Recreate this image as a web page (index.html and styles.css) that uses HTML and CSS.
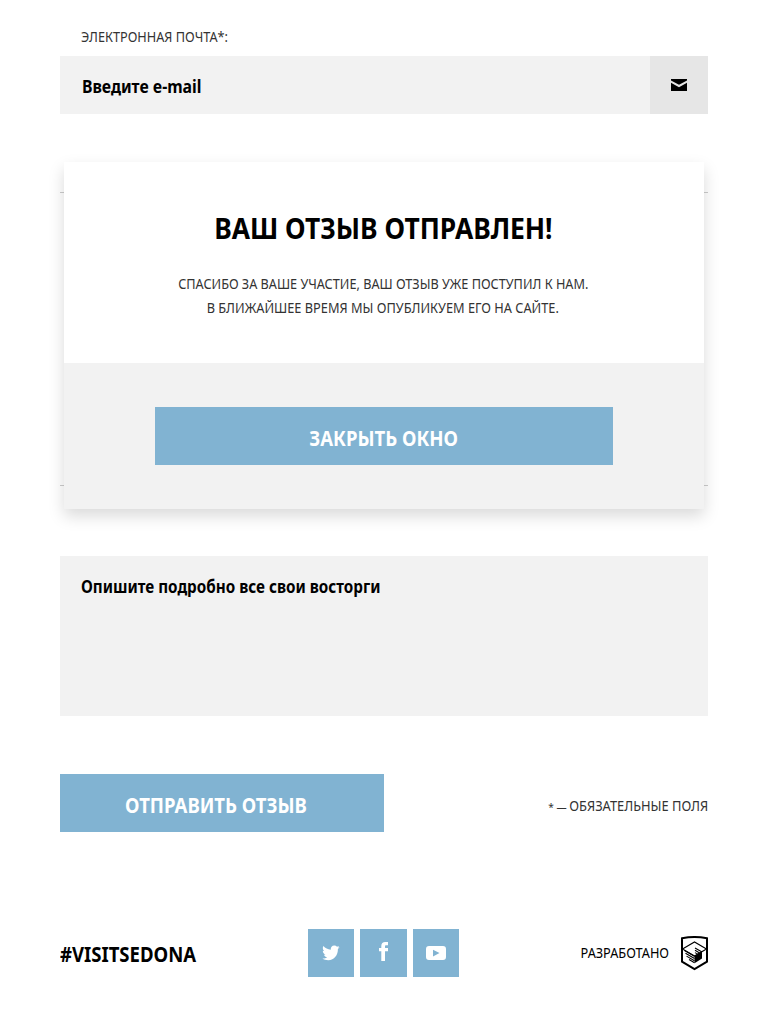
FILE: index.html
```html
<!DOCTYPE html>
<html lang="ru">
<head>
<meta charset="utf-8">
<title>Sedona</title>
<link rel="stylesheet" href="styles.css">
</head>
<body>
<main class="page">
  <form class="form">
    <div class="label"><span class="t t-label">ЭЛЕКТРОННАЯ ПОЧТА*:</span></div>
    <div class="email">
      <div class="email-field"><span class="t t-email">Введите e-mail</span></div>
      <div class="email-icon">
        <svg width="16" height="12" viewBox="0 0 16 12"><path d="M0 0H16V1.4L8 5.7L0 1.4Z"/><path d="M0 3.8L8 8.3L16 3.8V12H0Z"/></svg>
      </div>
    </div>
    <div class="fieldset"></div>
    <div class="textarea"><span class="t t-area">Опишите подробно все свои восторги</span></div>
    <div class="submit-row">
      <div class="button button-submit"><span class="t t-submit">ОТПРАВИТЬ ОТЗЫВ</span></div>
      <div class="note"><span class="t t-note"><span class="note-mark">* — </span>ОБЯЗАТЕЛЬНЫЕ ПОЛЯ</span></div>
    </div>
  </form>
  <footer class="footer">
    <div class="hashtag"><span class="t t-hash">#VISITSEDONA</span></div>
    <div class="social">
      <a class="social-link"><svg width="18" height="16" viewBox="0 0 18 16"><path d="M17.6 2.2L15.9 4C16.1 10 12.2 15.2 6.3 15.2C4 15.2 1.9 14.7.4 13.6C2.3 13.7 4 13.2 5.2 12.2C3.5 12 2.5 11 2 9.7H3.5C1.8 9 .8 7.6.8 5.8L2.3 6.2C.7 4.8.4 2.9 1.4 1.1C3.3 3.3 5.7 4.6 8.8 4.8C8.5 2.4 10 .6 12.3.6C13.4.6 14.3 1 15 1.7L17 .9L16.1 2.6Z"/></svg></a>
      <a class="social-link social-link-wide"><svg width="10" height="19" viewBox="0 0 10 19"><path d="M9 0V3.2H7C6.3 3.2 6 3.6 6 4.3V6H9V9.2H6V19H2.3V9.2H0V6H2.3V4C2.3 1.4 3.8 0 6.2 0Z"/></svg></a>
      <a class="social-link"><svg width="20" height="14" viewBox="0 0 20 14"><path fill-rule="evenodd" d="M3 0H17Q20 0 20 3V11Q20 14 17 14H3Q0 14 0 11V3Q0 0 3 0ZM7 3.8V10.4L13.5 7.1Z"/></svg></a>
    </div>
    <div class="dev">
      <span class="t t-dev">РАЗРАБОТАНО</span>
      <svg class="academy" width="27" height="35" viewBox="0 0 27 35"><path d="M1 2.3Q13.5 -.3 26 2.3V25.6L13.5 33.2L1 25.6Z" fill="none" stroke="#000" stroke-width="2"/><path d="M1.5 13L13.5 6L25.5 13L13.5 20Z" fill="none" stroke="#000" stroke-width="1.1"/><path d="M13.5 20L21 15.6V22.4L13.5 27.2Z"/><path d="M14 12L21 16M14 14.3L19 17.2M14 16.6L17 18.4M3.5 14.5L13.5 20.3M4.5 17.3L13.5 22.5M5.5 20.1L13.5 24.8M8 23.5L13.5 26.8" fill="none" stroke="#000" stroke-width="1.1"/></svg>
    </div>
  </footer>
</main>
<section class="modal">
  <div class="modal-head">
    <h2 class="modal-title"><span class="t t-title">ВАШ ОТЗЫВ ОТПРАВЛЕН!</span></h2>
    <p class="modal-line"><span class="t t-line1">СПАСИБО ЗА ВАШЕ УЧАСТИЕ, ВАШ ОТЗЫВ УЖЕ ПОСТУПИЛ К НАМ.</span></p>
    <p class="modal-line"><span class="t t-line2">В БЛИЖАЙШЕЕ ВРЕМЯ МЫ ОПУБЛИКУЕМ ЕГО НА САЙТЕ.</span></p>
  </div>
  <div class="modal-foot">
    <div class="button button-close"><span class="t t-close">ЗАКРЫТЬ ОКНО</span></div>
  </div>
</section>
</body>
</html>
```
FILE: styles.css
```css
* { box-sizing: border-box; }
body { margin: 0; background: #fff; color: #000; font-family: "Noto Sans", sans-serif; }
.page { width: 768px; height: 1013px; padding: 25px 60px 0; overflow: hidden; }
.t { display: inline-block; white-space: nowrap; transform-origin: 0 50%; }
.t-label { transform: scaleX(0.928); }
.t-email { transform: scaleX(0.897); }
.t-area { transform: scaleX(0.866); }
.t-title { transform: scaleX(0.898); }
.t-line1 { transform: scaleX(0.927); }
.t-line2 { transform: scaleX(0.933); }
.t-close, .t-submit, .t-hash { transform: scaleX(0.9); }
.t-note { transform: scaleX(0.94); }
.t-dev { transform: scaleX(0.931); }
.label { height: 31px; padding-left: 21px; font-size: 13.7px; line-height: 24px; color: #333; }
.email { display: flex; height: 58px; background: #f2f2f2; }
.email-field { flex: 1; padding-left: 22px; font-size: 17.6px; font-weight: 700; line-height: 61px; }
.email-icon { display: flex; width: 58px; align-items: center; justify-content: center; background: #e6e6e6; }
.fieldset { height: 294px; margin-top: 78px; border-top: 1px solid #ccc; border-bottom: 1px solid #ccc; }
.textarea { height: 160px; margin-top: 70px; padding: 18px 21px; background: #f2f2f2; font-size: 17.6px; font-weight: 700; line-height: 24px; }
.submit-row { display: flex; justify-content: space-between; height: 58px; margin-top: 58px; }
.button { display: flex; justify-content: center; height: 58px; background: #81b3d2; color: #fff; font-size: 20.6px; font-weight: 700; line-height: 63px; }
.button .t, .modal .t { transform-origin: 50% 50%; }
.button-submit { width: 324px; padding-right: 12px; }
.button-close { padding-right: 1px; }
.note { font-size: 13.7px; line-height: 64px; color: #333; }
.note-mark { font-size: 10.8px; }
.note .t, .dev .t { transform-origin: 100% 50%; }
.footer { display: grid; grid-template-columns: 248px 151px 249px; margin-top: 97px; height: 48px; }
.hashtag { font-size: 20.6px; font-weight: 700; line-height: 50px; }
.social { display: flex; gap: 6px; }
.social-link { display: flex; width: 46px; height: 48px; align-items: center; justify-content: center; background: #81b3d2; fill: #fff; }
.social-link-wide { width: 47px; padding-bottom: 3px; }
.social-link:first-child { padding-bottom: 1px; }
.dev { display: flex; justify-content: flex-end; gap: 12px; font-size: 13.7px; line-height: 48px; }
.academy { margin-top: 7px; }
.modal { position: absolute; top: 162px; left: 64px; width: 640px; height: 347px; background: #fff; box-shadow: 0 7px 15px rgba(0, 0, 0, 0.15); text-align: center; }
.modal-head { height: 201px; padding: 47px 2px 0 0; }
.modal-title { margin: 0 0 25px; font-size: 29.4px; line-height: 38px; }
.modal-line { margin: 0; font-size: 13.7px; line-height: 24px; color: #333; }
.modal-foot { height: 146px; padding: 44px 91px; background: #f2f2f2; }
```
